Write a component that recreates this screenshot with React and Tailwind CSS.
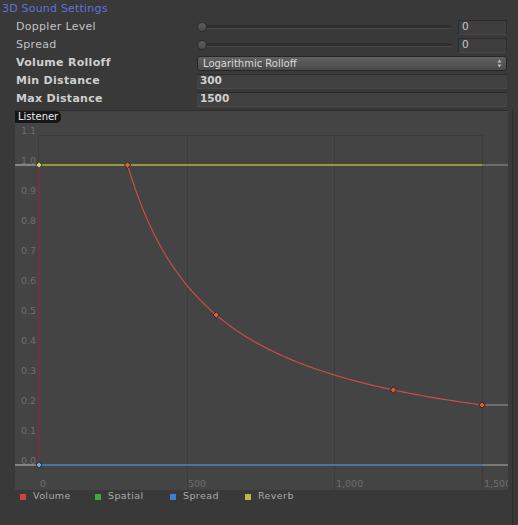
import React from "react";

const FONT = { fontFamily: '"DejaVu Sans", "Liberation Sans", sans-serif' };

// x/y mapping for the rolloff graph (page coordinates inside the svg viewBox)
const X0 = 39;
const XS = 0.29533; // px per distance unit
const Y0 = 465; // volume 0.0
const YS = 300; // px per 1.0 volume
const px = (d) => X0 + d * XS;
const py = (v) => Y0 - v * YS;

function rolloffPath() {
  const pts = [];
  pts.push(`M${px(300)},${py(1)}`);
  for (let d = 310; d <= 1500; d += 10) {
    pts.push(`L${px(d).toFixed(2)},${py(300 / d).toFixed(2)}`);
  }
  return pts.join(" ");
}

function Diamond({ x, y, fill, stroke }) {
  return (
    <polygon
      points={`${x},${y - 3.2} ${x + 3.2},${y} ${x},${y + 3.2} ${x - 3.2},${y}`}
      fill={fill}
      stroke={stroke}
      strokeWidth="1"
    />
  );
}

function Slider() {
  return (
    <div className="relative flex-1 h-[14px] flex items-center">
      <div className="w-full h-[4px] rounded-full bg-[#2e2e2e] border-b border-[#4a4a4a]" />
      <div className="absolute left-[0px] top-[2px] w-[10px] h-[10px] rounded-full bg-gradient-to-b from-[#5e5e5e] to-[#4a4a4a] border border-[#2a2a2a]" />
    </div>
  );
}

function NumberField({ value }) {
  return (
    <div className="w-[49px] h-[15px] bg-[#3e3e3e] border border-[#2c2c2c] border-b-[#474747] flex items-center pl-[3px] text-[10.5px] text-[#c8c8c8]">
      {value}
    </div>
  );
}

function Row({ label, bold, children }) {
  return (
    <div className="h-[18px] flex items-center">
      <div
        className={`w-[197px] shrink-0 pl-[16px] text-[11px] tracking-[0.3px] ${
          bold ? "font-bold text-[#cfcfcf]" : "text-[#c2c2c2]"
        }`}
      >
        {label}
      </div>
      <div className="flex-1 flex items-center gap-[6px] pr-[11px]">{children}</div>
    </div>
  );
}

function LegendItem({ color, label }) {
  return (
    <div className="w-[75px] flex items-center gap-[7px]">
      <div className={`w-[6px] h-[6px] ${color}`} />
      <span className="text-[9.5px] text-[#a9a9a9] tracking-[0.4px]">{label}</span>
    </div>
  );
}

export default function App() {
  const yTicks = ["1.1", "1.0", "0.9", "0.8", "0.7", "0.6", "0.5", "0.4", "0.3", "0.2", "0.1", "0.0"];
  return (
    <div className="w-[518px] h-[525px] bg-[#393939] overflow-hidden relative" style={FONT}>
      {/* section header */}
      <div className="h-[18px] flex items-center pl-[2px] text-[11px] tracking-[0.2px] text-[#5c74da]">
        3D Sound Settings
      </div>

      <Row label="Doppler Level">
        <Slider />
        <NumberField value="0" />
      </Row>
      <Row label="Spread">
        <Slider />
        <NumberField value="0" />
      </Row>
      <Row label="Volume Rolloff" bold>
        <div className="flex-1 h-[15px] rounded-[3px] border border-[#262626] bg-gradient-to-b from-[#616161] to-[#4a4a4a] flex items-center justify-between pl-[5px] pr-[4px] text-[10px] text-[#dadada]">
          <span>Logarithmic Rolloff</span>
          <svg width="5" height="9" viewBox="0 0 5 9">
            <path d="M2.5 0.5 L4.5 3.5 L0.5 3.5 Z" fill="#bdbdbd" />
            <path d="M2.5 8.5 L4.5 5.5 L0.5 5.5 Z" fill="#bdbdbd" />
          </svg>
        </div>
      </Row>
      <Row label="Min Distance" bold>
        <div className="flex-1 h-[15px] bg-[#414141] border-t border-[#2b2b2b] border-b border-b-[#4a4a4a] flex items-center pl-[3px] text-[10.5px] font-bold text-[#d0d0d0]">
          300
        </div>
      </Row>
      <Row label="Max Distance" bold>
        <div className="flex-1 h-[15px] bg-[#414141] border-t border-[#2b2b2b] border-b border-b-[#4a4a4a] flex items-center pl-[3px] text-[10.5px] font-bold text-[#d0d0d0]">
          1500
        </div>
      </Row>

      {/* rolloff graph */}
      <div className="mt-[2px] ml-[15px] w-[493px] h-[380px] relative bg-[#444444] border-t border-[#2e2e2e] overflow-hidden">
        <svg
          width="493"
          height="379"
          viewBox="15 111 493 379"
          className="block"
          style={FONT}
        >
          {/* grid */}
          <line x1={X0} y1={py(1.1) + 0.5} x2={px(1500)} y2={py(1.1) + 0.5} stroke="#3c3c3c" strokeWidth="1" />
          <line x1={X0 - 0.5} y1={py(1.1)} x2={X0 - 0.5} y2={py(1)} stroke="#3c3c3c" strokeWidth="1" />
          {[500, 1000, 1500].map((d) => (
            <line
              key={d}
              x1={Math.round(px(d)) + 0.5}
              y1={py(1.1)}
              x2={Math.round(px(d)) + 0.5}
              y2={490}
              stroke="#3c3c3c"
              strokeWidth="1"
            />
          ))}

          {/* y labels */}
          {yTicks.map((t, i) => (
            <text
              key={t}
              x="36"
              y={py(1.1) - 1 + i * 30}
              textAnchor="end"
              fontSize="9.5"
              fill="#6e6e6e"
            >
              {t}
            </text>
          ))}

          {/* x labels */}
          <text x="40" y="487" fontSize="9.5" fill="#6e6e6e">0</text>
          <text x="188" y="487" fontSize="9.5" fill="#6e6e6e">500</text>
          <text x="336" y="487" fontSize="9.5" fill="#6e6e6e">1,000</text>
          <text x="484" y="487" fontSize="9.5" fill="#6e6e6e">1,500</text>

          {/* axis ticks */}
          <line x1="14" y1={py(1)} x2={X0} y2={py(1)} stroke="#9a9a9a" strokeWidth="1.5" />
          <line x1="14" y1={Y0} x2={X0} y2={Y0} stroke="#9a9a9a" strokeWidth="1.5" />

          {/* listener marker */}
          <line x1={X0} y1={py(1)} x2={X0} y2={Y0} stroke="#842a42" strokeWidth="1.4" />
          <line x1={X0} y1={471.5} x2={px(1500)} y2={471.5} stroke="#4c4242" strokeWidth="1" />

          {/* volume */}
          <path d={rolloffPath()} fill="none" stroke="#cc4c46" strokeWidth="1.2" />
          <line x1={px(1500)} y1={py(0.2)} x2="508" y2={py(0.2)} stroke="#7d7d7d" strokeWidth="1.5" />

          {/* reverb */}
          <line x1={X0} y1={py(1)} x2={px(1500)} y2={py(1)} stroke="#b6b63a" strokeWidth="1.5" />
          <line x1={px(1500)} y1={py(1)} x2="508" y2={py(1)} stroke="#7a7a7a" strokeWidth="1.5" />

          {/* spread */}
          <line x1={X0} y1={Y0} x2={px(1500)} y2={Y0} stroke="#4a84c4" strokeWidth="1.5" />
          <line x1={px(1500)} y1={Y0} x2="508" y2={Y0} stroke="#8a8a8a" strokeWidth="1.5" />

          {/* keys */}
          <Diamond x={X0} y={py(1)} fill="#d8d26a" stroke="#3a3818" />
          <Diamond x={px(300)} y={py(1)} fill="#d06a3e" stroke="#3a1c12" />
          <Diamond x={px(600)} y={py(0.5)} fill="#d0603c" stroke="#3a1c12" />
          <Diamond x={px(1200)} y={py(0.25)} fill="#d0603c" stroke="#3a1c12" />
          <Diamond x={px(1500)} y={py(0.2)} fill="#d0603c" stroke="#3a1c12" />
          <Diamond x={X0} y={Y0} fill="#7aa6e0" stroke="#1c2a3c" />
        </svg>

        {/* listener badge */}
        <div className="absolute left-0 top-0 h-[12px] px-[3px] rounded-r-[5px] bg-[#161616] text-[10px] leading-[12px] text-[#ececec]">
          Listener
        </div>
      </div>

      {/* legend */}
      <div className="h-[13px] pl-[20px] flex items-center">
        <LegendItem color="bg-[#c8463e]" label="Volume" />
        <LegendItem color="bg-[#3ea83e]" label="Spatial" />
        <LegendItem color="bg-[#3c7ed8]" label="Spread" />
        <LegendItem color="bg-[#b8b840]" label="Reverb" />
      </div>

      {/* scrollbar edge */}
      <div className="absolute right-[5px] top-[110px] bottom-0 w-[1px] bg-[#2c2c2c]" />
    </div>
  );
}
